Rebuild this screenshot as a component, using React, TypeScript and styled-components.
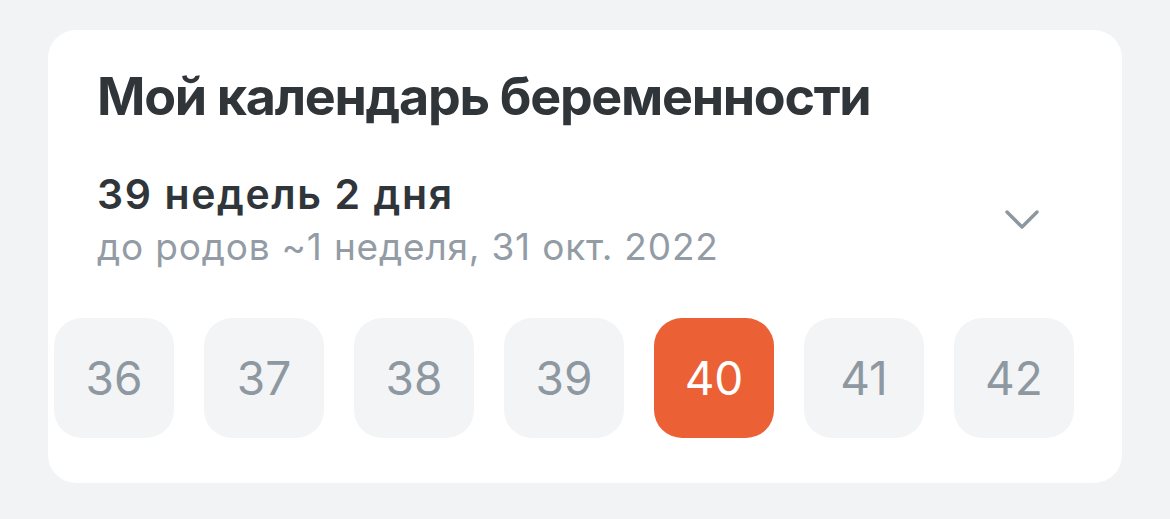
import { FC } from 'react';
import styled, { createGlobalStyle } from 'styled-components';

const weeks = [36, 37, 38, 39, 40, 41, 42];
const currentWeek = 40;

const GlobalStyle = createGlobalStyle`
  html, body {
    margin: 0;
    padding: 0;
    background: #f2f3f5;
    font-family: Inter, 'Noto Sans', 'DejaVu Sans', sans-serif;
  }
  #root {
    padding: 30px 48px 36px;
  }
`;

const App: FC = () => (
  <>
    <GlobalStyle />
    <Card>
      <Header>
        <Title>Мой календарь беременности</Title>
        <WeekRow>
          <WeekInfo>
            <WeekTitle>39 недель 2 дня</WeekTitle>
            <WeekSub>до родов ~1 неделя, 31 окт. 2022</WeekSub>
          </WeekInfo>
          <Chevron viewBox="0 0 34 19" fill="none">
            <path
              d="M2 2 L17 17 L32 2"
              stroke="#8d979f"
              strokeWidth="3.4"
              strokeLinecap="round"
              strokeLinejoin="round"
            />
          </Chevron>
        </WeekRow>
      </Header>
      <WeekList>
        {weeks.map((w) => (
          <WeekPill key={w} $active={w === currentWeek}>
            {w}
          </WeekPill>
        ))}
      </WeekList>
    </Card>
  </>
);

export default App;

const Card = styled.div`
  background: #ffffff;
  border-radius: 28px;
  padding: 36px 0 45px;
  overflow: hidden;
`;

const Header = styled.div`
  padding: 0 49px;
`;

const Title = styled.h1`
  margin: 0;
  font-size: 52px;
  line-height: 62px;
  font-weight: 700;
  letter-spacing: -1.3px;
  color: #30353a;
`;

const WeekRow = styled.div`
  margin-top: 41px;
  display: flex;
  align-items: center;
  justify-content: space-between;
`;

const WeekInfo = styled.div`
  display: flex;
  flex-direction: column;
  gap: 6px;
`;

const WeekTitle = styled.div`
  font-size: 41px;
  line-height: 50px;
  font-weight: 600;
  letter-spacing: 1.6px;
  color: #30353a;
`;

const WeekSub = styled.div`
  font-size: 37px;
  line-height: 44px;
  font-weight: 400;
  letter-spacing: 0.8px;
  color: #939ca5;
`;

const Chevron = styled.svg`
  width: 34px;
  height: 19px;
  margin-right: 34px;
  flex-shrink: 0;
`;

const WeekList = styled.div`
  margin-top: 49px;
  padding: 0 6px;
  display: flex;
  gap: 30px;
`;

const WeekPill = styled.div<{ $active?: boolean }>`
  width: 120px;
  height: 120px;
  flex-shrink: 0;
  border-radius: 28px;
  display: flex;
  align-items: center;
  justify-content: center;
  font-size: 46px;
  font-weight: 400;
  background: ${({ $active }) => ($active ? '#eb6135' : '#f3f4f6')};
  color: ${({ $active }) => ($active ? '#ffffff' : '#8e98a1')};
`;
